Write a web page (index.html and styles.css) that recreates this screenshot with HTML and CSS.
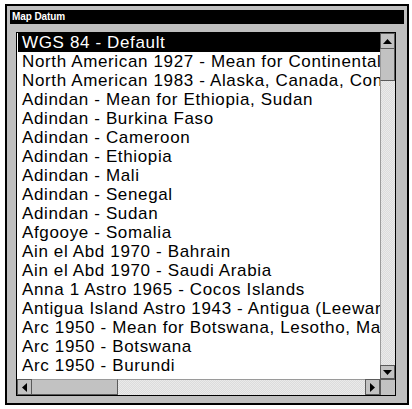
FILE: index.html
```html
<!DOCTYPE html>
<html lang="en">
<head>
    <meta charset="UTF-8">
    <meta name="viewport" content="width=device-width, initial-scale=1.0">
    <title>Map Datum</title>
    <link rel="stylesheet" href="styles.css">
</head>
<body>
    <div class="prozor">
        <div class="naslov">Map Datum</div>
        <div class="lista">
            <ul class="stavke">
                <li class="odabrano">WGS 84 - Default</li>
                <li>North American 1927 - Mean for Continental US</li>
                <li>North American 1983 - Alaska, Canada, Continental US</li>
                <li>Adindan - Mean for Ethiopia, Sudan</li>
                <li>Adindan - Burkina Faso</li>
                <li>Adindan - Cameroon</li>
                <li>Adindan - Ethiopia</li>
                <li>Adindan - Mali</li>
                <li>Adindan - Senegal</li>
                <li>Adindan - Sudan</li>
                <li>Afgooye - Somalia</li>
                <li>Ain el Abd 1970 - Bahrain</li>
                <li>Ain el Abd 1970 - Saudi Arabia</li>
                <li>Anna 1 Astro 1965 - Cocos Islands</li>
                <li>Antigua Island Astro 1943 - Antigua (Leeward Islands)</li>
                <li>Arc 1950 - Mean for Botswana, Lesotho, Malawi</li>
                <li>Arc 1950 - Botswana</li>
                <li>Arc 1950 - Burundi</li>
            </ul>
            <!-- okomiti klizač -->
            <div class="klizac-v">
                <div class="gumb">
                    <svg width="9" height="5" viewBox="0 0 9 5"><polygon points="0,5 4.5,0 9,5" fill="#000"/></svg>
                </div>
                <div class="palac-v"></div>
                <div class="staza"></div>
                <div class="gumb">
                    <svg width="9" height="5" viewBox="0 0 9 5"><polygon points="0,0 9,0 4.5,5" fill="#000"/></svg>
                </div>
            </div>
            <!-- vodoravni klizač -->
            <div class="klizac-h">
                <div class="gumb">
                    <svg width="5" height="9" viewBox="0 0 5 9"><polygon points="5,0 5,9 0,4.5" fill="#000"/></svg>
                </div>
                <div class="palac-h"></div>
                <div class="staza"></div>
                <div class="gumb">
                    <svg width="5" height="9" viewBox="0 0 5 9"><polygon points="0,0 5,4.5 0,9" fill="#000"/></svg>
                </div>
            </div>
            <div class="kut"></div>
        </div>
    </div>
</body>
</html>
```

FILE: styles.css
```css
body {margin: 4px 0 0 5px; background-color: white;
    font-family: "Liberation Sans", Arial, sans-serif;
}
.prozor {width: 404px; height: 401px; box-sizing: border-box;
    border: 2px solid black; background-color: #bfbfbf;
    padding: 4px 3px 7px 3px; display: flex; flex-direction: column;
}
.naslov {height: 14px; background-color: black; color: white;
    font-size: 10px; font-weight: bold; letter-spacing: -0.1px;
    line-height: 14px; padding-left: 2px;
}
.lista {flex: 1; margin: 8px 8px 0 6px; border: 1px solid black; background-color: white;
    display: grid; grid-template-columns: 1fr 15px; grid-template-rows: 1fr 16px;
    min-height: 0;
}
.stavke {list-style: none; margin: 0; padding: 0; overflow: hidden; min-width: 0;}
.stavke li {height: 19px; line-height: 19px; padding-left: 4px; margin-left: 1px;
    font-size: 17px; letter-spacing: 0.64px; white-space: nowrap; color: black;
}
.stavke li.odabrano {background-color: black; color: white;}

/* klizači */
.klizac-v {display: flex; flex-direction: column; min-height: 0;}
.klizac-h {display: flex;}
.gumb {width: 15px; height: 16px; box-sizing: border-box; flex: none;
    background-color: #c2c2c2; border: 1px solid #5a5a5a;
    display: flex; align-items: center; justify-content: center;
}
.klizac-v .gumb:last-child {height: 14px;}
.palac-v {height: 31px; flex: none; background-color: #c2c2c2;
    border-right: 1px solid #5a5a5a; border-bottom: 1px solid #5a5a5a; border-left: 1px solid #9a9a9a;
}
.palac-h {width: 85px; flex: none; background-color: #c2c2c2;
    border-right: 1px solid #5a5a5a; border-bottom: 1px solid #5a5a5a; border-top: 1px solid #9a9a9a;
}
.staza {flex: 1; background-color: #e2e2e2;
    background-image: repeating-conic-gradient(#dcdcdc 0 25%, #eaeaea 0 50%);
    background-size: 2px 2px;
}
.klizac-v .staza {border-left: 1px solid #9a9a9a;}
.klizac-h .staza {border-top: 1px solid #9a9a9a;}
.kut {background-color: #c2c2c2; border-left: 1px solid #5a5a5a; border-top: 1px solid #5a5a5a;}
```
